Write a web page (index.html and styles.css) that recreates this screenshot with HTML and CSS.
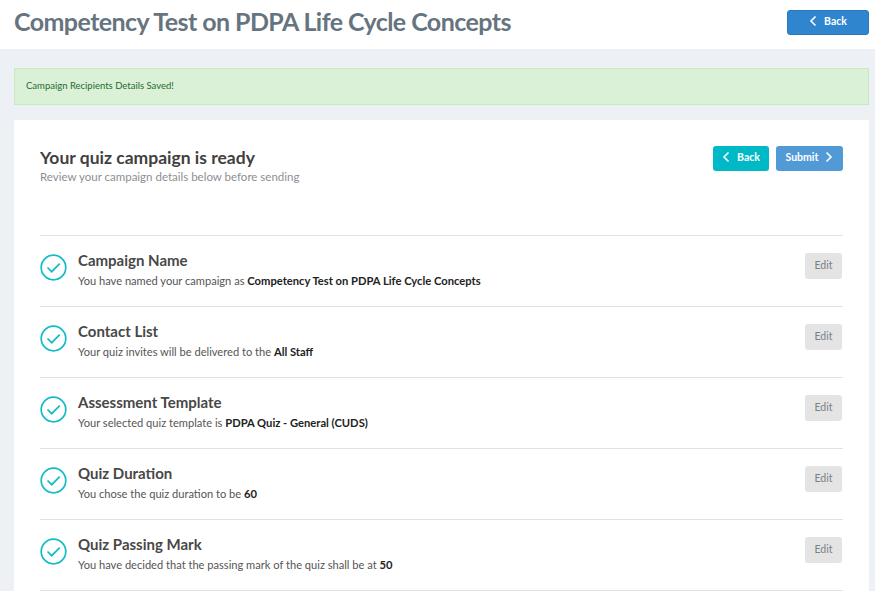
FILE: index.html
```html
<!DOCTYPE html>
<html lang="en">
<head>
    <meta charset="UTF-8">
    <meta name="viewport" content="width=device-width, initial-scale=1.0">
    <title>Campaign Review</title>
    <link rel="stylesheet" href="styles.css">
</head>
<body>
    <div class="topbar">
        <h1 class="page-title">Competency Test on PDPA Life Cycle Concepts</h1>
        <a class="btn btn-blue btn-top">
            <svg class="chev" viewBox="0 0 8 12"><path d="M6.500 1.500 2 6l4.500 4.500"/></svg>
            Back
        </a>
    </div>

    <div class="content">
        <div class="alert">Campaign Recipients Details Saved!</div>

        <div class="card">
            <div class="card-head">
                <div>
                    <h2 class="card-title">Your quiz campaign is ready</h2>
                    <p class="card-sub">Review your campaign details below before sending</p>
                </div>
                <div class="card-actions">
                    <a class="btn btn-teal">
                        <svg class="chev" viewBox="0 0 8 12"><path d="M6.500 1.500 2 6l4.500 4.500"/></svg>
                        Back
                    </a>
                    <a class="btn btn-light-blue">
                        Submit
                        <svg class="chev" viewBox="0 0 8 12"><path d="M1.500 1.500 6 6l-4.500 4.500"/></svg>
                    </a>
                </div>
            </div>

            <div class="steps">
                <div class="step">
                    <svg class="tick" viewBox="0 0 27 27"><circle cx="13.500" cy="13.500" r="12.300"/><path d="M7.500 13.500l4.200 4.200 8-8"/></svg>
                    <div class="step-text">
                        <h3>Campaign Name</h3>
                        <p>You have named your campaign as <b>Competency Test on PDPA Life Cycle Concepts</b></p>
                    </div>
                    <a class="edit">Edit</a>
                </div>
                <div class="step">
                    <svg class="tick" viewBox="0 0 27 27"><circle cx="13.500" cy="13.500" r="12.300"/><path d="M7.500 13.500l4.200 4.200 8-8"/></svg>
                    <div class="step-text">
                        <h3>Contact List</h3>
                        <p>Your quiz invites will be delivered to the <b>All Staff</b></p>
                    </div>
                    <a class="edit">Edit</a>
                </div>
                <div class="step">
                    <svg class="tick" viewBox="0 0 27 27"><circle cx="13.500" cy="13.500" r="12.300"/><path d="M7.500 13.500l4.200 4.200 8-8"/></svg>
                    <div class="step-text">
                        <h3>Assessment Template</h3>
                        <p>Your selected quiz template is <b>PDPA Quiz - General (CUDS)</b></p>
                    </div>
                    <a class="edit">Edit</a>
                </div>
                <div class="step">
                    <svg class="tick" viewBox="0 0 27 27"><circle cx="13.500" cy="13.500" r="12.300"/><path d="M7.500 13.500l4.200 4.200 8-8"/></svg>
                    <div class="step-text">
                        <h3>Quiz Duration</h3>
                        <p>You chose the quiz duration to be <b>60</b></p>
                    </div>
                    <a class="edit">Edit</a>
                </div>
                <div class="step">
                    <svg class="tick" viewBox="0 0 27 27"><circle cx="13.500" cy="13.500" r="12.300"/><path d="M7.500 13.500l4.200 4.200 8-8"/></svg>
                    <div class="step-text">
                        <h3>Quiz Passing Mark</h3>
                        <p>You have decided that the passing mark of the quiz shall be at <b>50</b></p>
                    </div>
                    <a class="edit">Edit</a>
                </div>
            </div>
        </div>
    </div>
</body>
</html>
```

FILE: styles.css
```css
html, body {
    height: 100%;
}

body {
    margin: 0;
    font-family: "Lato", "Open Sans", sans-serif;
    background-color: #edf1f6;
    color: #444;
    overflow: hidden;
}

.topbar {
    display: flex;
    justify-content: space-between;
    align-items: center;
    height: 49px;
    padding: 0 6px 4px 14px;
    box-sizing: border-box;
    background-color: #fff;
}

.page-title {
    margin: 0 0 4px;
    font-size: 25px;
    letter-spacing: -0.570px;
    font-weight: 700;
    color: #66747f;
}

.btn {
    display: inline-flex;
    align-items: center;
    justify-content: center;
    gap: 7px;
    height: 25px;
    padding-bottom: 3px;
    box-sizing: border-box;
    border-radius: 3px;
    font-size: 10.500px;
    font-weight: 700;
    color: #fff;
}

.chev {
    width: 8px;
    height: 12px;
    fill: none;
    stroke: #fff;
    stroke-width: 1.600;
}

.btn-blue {
    background-color: #3085cf;
    border: 1px solid #2a79bd;
}

.btn-top {
    width: 82px;
}

.btn-teal {
    width: 56px;
    background-color: #00b9c6;
}

.btn-light-blue {
    width: 67px;
    background-color: #529ad6;
}

.content {
    padding: 19px 6px 0 14px;
}

.alert {
    display: flex;
    align-items: center;
    height: 37px;
    box-sizing: border-box;
    padding: 0 0 3px 11px;
    background-color: #daf1d8;
    border: 1px solid #c8e8bf;
    font-size: 9.500px;
    color: #1f6b2e;
}

.card {
    margin-top: 15px;
    padding: 26px 26px 0;
    background-color: #fff;
    height: 480px;
    box-sizing: border-box;
}

.card-head {
    display: flex;
    justify-content: space-between;
    align-items: flex-start;
    height: 89px;
}

.card-title {
    margin: 0;
    font-size: 17.500px;
    line-height: 24px;
    font-weight: 700;
    color: #423f40;
}

.card-sub {
    margin: 0;
    font-size: 11.500px;
    line-height: 14px;
    color: #8e8e93;
}

.card-actions {
    display: flex;
    gap: 7px;
}

.steps {
    border-top: 1px solid #e2e2e2;
}

.step {
    display: flex;
    align-items: center;
    height: 71px;
    padding-bottom: 6px;
    box-sizing: border-box;
    border-bottom: 1px solid #e2e2e2;
}

.tick {
    flex: none;
    width: 27px;
    height: 27px;
    margin: 0 11px 2px 0;
    fill: none;
    stroke: #12bcc5;
    stroke-width: 1.700;
}

.step-text {
    flex: 1;
    padding-top: 1px;
}

.step-text h3 {
    margin: 0;
    font-size: 15px;
    line-height: 20px;
    font-weight: 700;
    color: #484848;
}

.step-text p {
    margin: 3px 0 0;
    font-size: 11.100px;
    line-height: 15px;
    color: #555;
}

.step-text b {
    font-size: 11.200px;
    color: #222;
}

.edit {
    display: flex;
    align-items: center;
    justify-content: center;
    width: 37px;
    height: 26px;
    margin: 0 1px 4px 0;
    padding-bottom: 2px;
    box-sizing: border-box;
    border-radius: 3px;
    background-color: #e4e4e4;
    font-size: 10.500px;
    color: #7b7f86;
}
```
